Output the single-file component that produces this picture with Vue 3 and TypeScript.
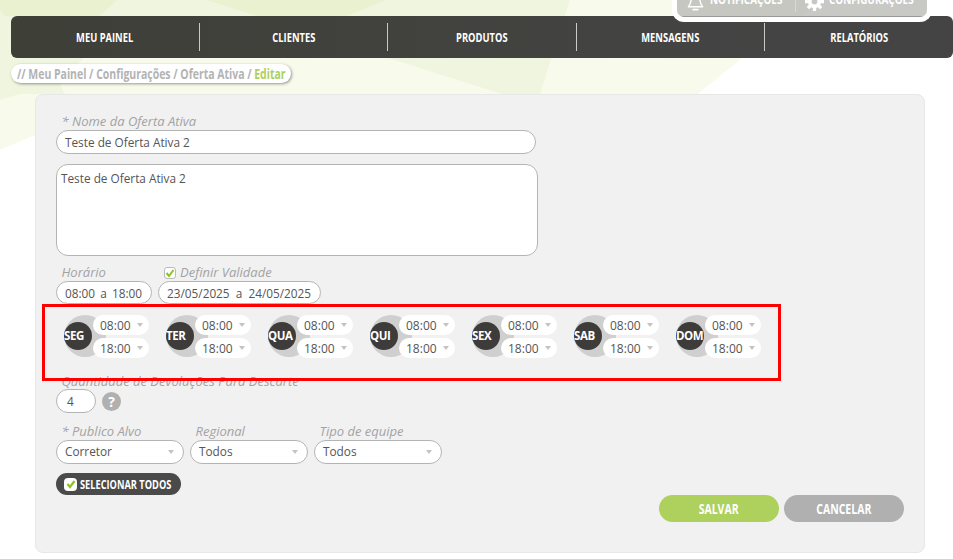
<script setup lang="ts">
const menu: string[] = ['MEU PAINEL', 'CLIENTES', 'PRODUTOS', 'MENSAGENS', 'RELATÓRIOS']
const days: string[] = ['SEG', 'TER', 'QUA', 'QUI', 'SEX', 'SAB', 'DOM']
const selects = [
  { label: '* Publico Alvo', value: 'Corretor', cls: 'w128' },
  { label: 'Regional', value: 'Todos', cls: 'w118' },
  { label: 'Tipo de equipe', value: 'Todos', cls: 'w128' },
]
</script>

<template>
  <div class="page">
    <svg class="bg" width="953" height="559" viewBox="0 0 953 559" aria-hidden="true">
      <polygon points="0,0 826,0 742,58 698,94 640,130 35,135 0,150" fill="#f8fbec" />
      <polygon points="296,0 570,0 540,94 502,94 388,58 300,30" fill="#f0f5e0" />
      <polygon points="0,0 206,0 256,16 200,30 99,40 60,85 65,94 20,94 0,100" fill="#f0f5e0" />
      <polygon points="0,0 117,0 99,16 5,16 0,10" fill="#e9f1d1" />
      <polygon points="206,0 386,0 347,16 256,16" fill="#e9f1d1" />
    </svg>

    <div class="tab">
      <span class="tab-item first-item">
        <svg class="ico" width="19" height="19" viewBox="0 0 20 20"><path d="M2.500 15.500c2-2 2.500-4 3-7.500a4.500 4.500 0 0 1 9 0c.5 3.500 1 5.500 3 7.500z" fill="none" stroke="#fff" stroke-width="1.500" stroke-linejoin="round" /><path d="M7.500 18.500h5" stroke="#fff" stroke-width="1.800" stroke-linecap="round" /></svg>
        <b class="t1">NOTIFICAÇÕES</b>
      </span>
      <span class="tab-item second">
        <svg class="ico" width="19" height="19" viewBox="0 0 20 20"><circle cx="10" cy="10" r="5" fill="none" stroke="#fff" stroke-width="4" /><path d="M10 0v4M10 16v4M0 10h4M16 10h4M3 3l3 3M14 14l3 3M17 3l-3 3M6 14l-3 3" stroke="#fff" stroke-width="3.500" /></svg>
        <b>CONFIGURAÇÕES</b>
      </span>
    </div>

    <nav class="nav">
      <a v-for="m in menu" :key="m" class="nav-item"><span class="cond">{{ m }}</span></a>
    </nav>

    <div class="crumb"><span class="cond">// Meu Painel / Configurações / Oferta Ativa / <em>Editar</em></span></div>

    <main class="card">
      <label class="lbl first">* Nome da Oferta Ativa</label>
      <div class="field name">Teste de Oferta Ativa 2</div>
      <div class="area">Teste de Oferta Ativa 2</div>

      <div class="row two">
        <div>
          <label class="lbl">Horário</label>
          <div class="field hours">08:00&nbsp; a&nbsp; 18:00</div>
        </div>
        <div>
          <label class="lbl check-lbl">
            <span class="check"><svg width="10" height="10" viewBox="0 0 10 10"><path d="M1.500 5l2.500 3 4.500-6" fill="none" stroke="#8cc220" stroke-width="2" /></svg></span>
            Definir Validade
          </label>
          <div class="field dates">23/05/2025&nbsp; a&nbsp; 24/05/2025</div>
        </div>
      </div>

      <div class="days">
        <div v-for="d in days" :key="d" class="day">
          <div class="badge"><span class="disc">{{ d }}</span></div>
          <div class="times">
            <div class="time">08:00<i class="caret"></i></div>
            <div class="time">18:00<i class="caret"></i></div>
          </div>
        </div>
      </div>

      <label class="lbl qty-lbl">Quantidade de Devoluções Para Descarte</label>
      <div class="qty-row">
        <div class="field qty">4</div>
        <span class="help">?</span>
      </div>

      <div class="row selects">
        <div v-for="s in selects" :key="s.label">
          <label class="lbl">{{ s.label }}</label>
          <div class="field select" :class="s.cls">{{ s.value }}<i class="caret"></i></div>
        </div>
      </div>

      <button class="all">
        <span class="all-check"><svg width="10" height="10" viewBox="0 0 10 10"><path d="M1.500 5l2.500 3 4.500-6" fill="none" stroke="#8cc220" stroke-width="2.200" /></svg></span>
        <span class="cond">SELECIONAR TODOS</span>
      </button>

      <div class="actions">
        <button class="btn save"><span class="cond">SALVAR</span></button>
        <button class="btn cancel"><span class="cond">CANCELAR</span></button>
      </div>
    </main>

    <div class="mark"></div>
  </div>
</template>

<style>
html, body { margin: 0; background: #fff; overflow: hidden; }
</style>

<style scoped>
.page {
  position: relative;
  width: 953px;
  height: 559px;
  overflow: hidden;
  padding-top: 16px;
  box-sizing: border-box;
  font-family: "Open Sans", "Liberation Sans", sans-serif;
  font-size: 11.800px;
  color: #555;
}
.bg { position: absolute; left: 0; top: 0; }
.cond {
  display: inline-block;
  font-weight: 700;
  transform: scaleX(0.72);
  white-space: nowrap;
}
.tab {
  position: absolute;
  z-index: 2;
  left: 672px;
  top: -14px;
  width: 260px;
  height: 36px;
  box-sizing: border-box;
  border: 5px solid #fff;
  border-top: 0;
  border-radius: 0 0 12px 12px;
  background: rgba(182, 182, 178, .75);
  display: flex;
  align-items: flex-start;
  color: #fff;
  font-size: 12px;
}
.tab-item { display: flex; align-items: center; height: 26px; }
.tab-item b {
  display: inline-block;
  transform: scaleX(.83);
  transform-origin: left;
  font-weight: 700;
  white-space: nowrap;
}
.ico { flex: none; margin-top: 5px; }
.first-item { width: 118px; padding-left: 9px; box-sizing: border-box; }
.t1 { margin-left: 5px; }
.second { padding-left: 9px; gap: 5px; border-left: 1px solid #d8d8d6; }
.nav {
  position: relative;
  margin-left: 11px;
  height: 42px;
  display: flex;
  align-items: center;
  background: linear-gradient(90deg, #3e3f37, #444 80%);
  border-radius: 6px;
}
.nav-item {
  flex: 1;
  height: 28px;
  display: flex;
  align-items: center;
  justify-content: center;
  color: #fff;
  font-size: 13px;
  border-right: 1px solid #c9c9c5;
}
.nav-item:last-child { border-right: 0; }
.crumb {
  position: relative;
  width: 280px;
  height: 19px;
  margin: 6px 0 0 11px;
  border-radius: 10px;
  background: #fff;
  box-shadow: 1px 1px 3px rgba(0, 0, 0, .4);
  color: #b3b3b3;
  font-size: 15px;
  line-height: 18px;
  white-space: nowrap;
}
.crumb .cond { transform: scaleX(.698); transform-origin: left; margin-left: 6px; }
.crumb em { font-style: normal; color: #aed05c; }
.card {
  position: relative;
  margin: 11px 0 0 35px;
  width: 890px;
  height: 459px;
  box-sizing: border-box;
  padding: 18px 20px 0;
  background: #f1f1f1;
  border: 1px solid #e7e7e7;
  border-radius: 8px;
}
.lbl {
  display: block;
  padding-left: 5.500px;
  height: 17px;
  line-height: 17px;
  font-size: 13px;
  font-style: italic;
  color: #a3a3a3;
  white-space: nowrap;
}
.field {
  box-sizing: border-box;
  height: 24px;
  line-height: 22px;
  background: #fff;
  border: 1px solid #b4b4b4;
  border-radius: 12px;
  padding: 0 8px;
  white-space: nowrap;
  position: relative;
}
.name { width: 480px; }
.area {
  box-sizing: border-box;
  width: 482px;
  height: 92px;
  margin-top: 10px;
  padding: 5px 4px;
  background: #fff;
  border: 1px solid #b4b4b4;
  border-radius: 12px;
  line-height: 17px;
}
.row { display: flex; gap: 6px; }
.two { margin-top: 8px; }
.hours { width: 96px; height: 23px; word-spacing: -.5px; }
.dates { width: 163px; height: 23px; }
.check-lbl { display: flex; align-items: center; gap: 4px; padding-left: 6px; }
.check {
  width: 12px;
  height: 12px;
  box-sizing: border-box;
  background: #fff;
  border: 1px solid #bbb;
  border-radius: 3px;
  display: flex;
  align-items: center;
  justify-content: center;
}
.days { display: flex; gap: 19px; margin: 11px 0 0 8px; height: 43px; }
.day { display: flex; width: 83px; position: relative; }
.badge {
  width: 42px;
  height: 42px;
  border-radius: 50%;
  background: #cfcfcf;
  flex: none;
  display: flex;
  align-items: center;
}
.disc {
  width: 28px;
  height: 28px;
  border-radius: 50%;
  background: #3d3c3a;
  color: #fff;
  font-size: 11.500px;
  font-weight: 700;
  line-height: 27px;
  letter-spacing: -.4px;
  white-space: nowrap;
}
.times {
  position: absolute;
  left: 29px;
  top: 0;
  display: flex;
  flex-direction: column;
  gap: 3px;
}
.time {
  position: relative;
  box-sizing: border-box;
  width: 56px;
  height: 20px;
  line-height: 22px;
  padding-left: 7px;
  font-size: 12px;
  background: #fff;
  border-radius: 10px;
}
.caret {
  position: absolute;
  right: 6px;
  top: 50%;
  margin-top: -2px;
  border: 3.500px solid transparent;
  border-top: 4px solid #c4c4c4;
  border-bottom: 0;
}
.qty-lbl { margin-top: 15px; height: 16px; line-height: 16px; }
.qty-row { display: flex; align-items: center; gap: 6px; }
.qty { width: 40px; padding-left: 10px; }
.help {
  width: 19px;
  height: 19px;
  border-radius: 50%;
  background: #b0b0b0;
  color: #fff;
  font-weight: 700;
  font-size: 14px;
  line-height: 19px;
  text-align: center;
}
.selects { margin-top: 10px; }
.w128 { width: 128px; }
.w118 { width: 118px; }
.select { line-height: 20px; }
.select .caret { right: 9px; }
.all {
  display: flex;
  align-items: center;
  width: 125px;
  height: 22px;
  margin-top: 9px;
  padding: 0 0 0 8px;
  border: 0;
  border-radius: 11px;
  background: #4a4a4a;
  color: #fff;
  font-family: inherit;
  font-size: 12px;
}
.all .cond { transform-origin: left; margin-left: 3px; transform: scaleX(.77); }
.all-check {
  width: 13px;
  height: 13px;
  flex: none;
  border-radius: 4px;
  background: #fff;
  display: flex;
  align-items: center;
  justify-content: center;
}
.actions {
  position: absolute;
  right: 20px;
  top: 400px;
  display: flex;
  gap: 5px;
}
.btn {
  width: 120px;
  height: 27px;
  border: 0;
  border-radius: 14px;
  color: #fff;
  font-family: inherit;
  font-size: 14px;
}
.btn .cond { transform: scaleX(.75); }
.save { background: #aed05c; }
.cancel { background: #b0b0b0; }
.mark {
  position: absolute;
  z-index: 3;
  left: 42px;
  top: 304px;
  width: 739px;
  height: 77px;
  box-sizing: border-box;
  border: 3px solid #f00;
}
</style>
